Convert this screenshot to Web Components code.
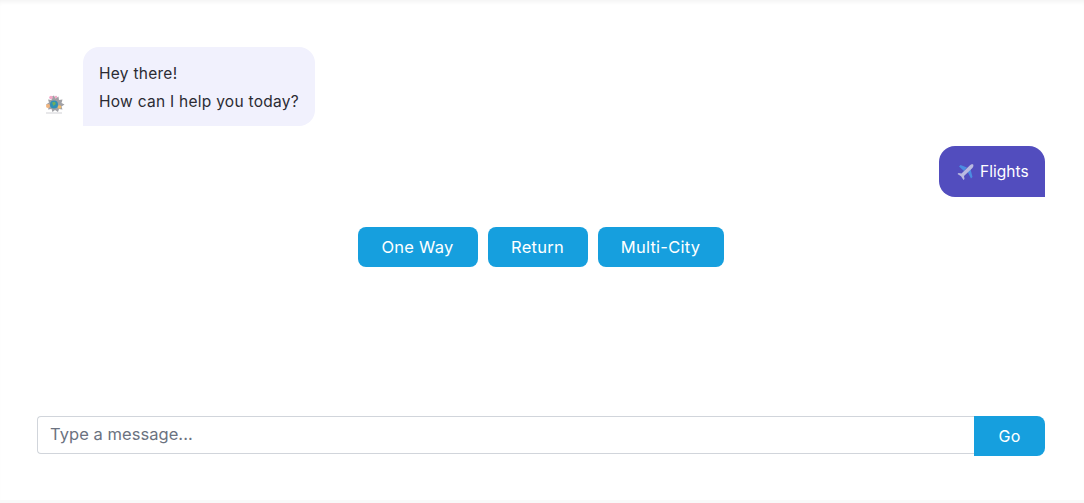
<!DOCTYPE html>
<html lang="en">
<head>
<meta charset="utf-8">
<title>Chat</title>
<style>
  html, body { margin: 0; background: #f9f9f9; }
  body { font-family: Inter, "Liberation Sans", sans-serif; }
</style>
</head>
<body>
<chat-app>
  <bot-message>
    <p>Hey there!</p>
    <p>How can I help you today?</p>
  </bot-message>
  <user-message>Flights</user-message>
  <quick-replies>
    <quick-reply style="--width: 120px">One Way</quick-reply>
    <quick-reply style="--width: 100px">Return</quick-reply>
    <quick-reply style="--width: 126px">Multi-City</quick-reply>
  </quick-replies>
</chat-app>
<script>
customElements.define(
  "chat-app",
  class extends HTMLElement {
    constructor() {
      super();
      this.attachShadow({ mode: "open" }).innerHTML = `
        <style>
        :host {
          display: flex;
          flex-direction: column;
          height: 500px;
          box-sizing: border-box;
          background: #fff;
          box-shadow: inset 0 4px 4px -2px rgba(0, 0, 0, 0.05);
        }
        .log {
          flex: 1;
          display: flex;
          flex-direction: column;
          padding: 47px 39px 0 37px;
        }
        .foot {
          padding: 0 39px 44px 37px;
        }
        </style>
        <div class="log"><slot></slot></div>
        <div class="foot"><message-box></message-box></div>
      `;
    }
  }
);

customElements.define(
  "bot-message",
  class extends HTMLElement {
    constructor() {
      super();
      this.attachShadow({ mode: "open" }).innerHTML = `
        <style>
        :host {
          display: flex;
          align-items: flex-end;
          gap: 17px;
          padding-left: 7px;
        }
        svg { width: 22px; height: 22px; margin-bottom: 10px; margin-left: -1px; margin-right: 1px; flex: none; }
        .bubble {
          width: 200px;
          background: #f1f1fd;
          border-radius: 16px 16px 16px 0;
          padding: 13px 16px 10px;
          color: #2b2b33;
          font-size: 15.5px;
          line-height: 28px;
          letter-spacing: 0.27px;
          white-space: nowrap;
        }
        ::slotted(p) { margin: 0; }
        </style>
        <svg viewBox="0 0 22 22">
          <path d="M11 1.500l1.500 3 3-2 .5 3.500 3.500-.5-1 3.500 3 1.500-3 2 1 3-3.500-.5-1 3-3-2-2.500 2-1-3-3.500.5 1-3.500-3-1.500 3-2-1-3 3.500.5.500-3.500z" fill="#77777f" opacity=".7"/>
          <circle cx="8" cy="3.500" r="1.800" fill="#f4a9c8"/>
          <circle cx="13" cy="3" r="1.200" fill="#f4a9c8"/>
          <circle cx="5" cy="12" r="2" fill="#f3b57e"/>
          <circle cx="16.500" cy="13" r="1.800" fill="#f2bb6a"/>
          <circle cx="11" cy="10.500" r="4" fill="#2e8fb5"/>
          <path d="M9 8.500l3-.8 .8 2.300-2.400 2z" fill="#6fae5c"/>
          <rect x="3" y="18.500" width="16" height="1" fill="#d2d2d6"/>
        </svg>
        <div class="bubble"><slot></slot></div>
      `;
    }
  }
);

customElements.define(
  "user-message",
  class extends HTMLElement {
    constructor() {
      super();
      this.attachShadow({ mode: "open" }).innerHTML = `
        <style>
        :host {
          display: flex;
          justify-content: flex-end;
          margin-top: 20px;
        }
        .bubble {
          display: flex;
          align-items: center;
          gap: 5px;
          height: 51px;
          width: 106px;
          box-sizing: border-box;
          padding: 0 0 0 18px;
          background: #524dbe;
          border-radius: 16px 16px 0 16px;
          color: #fff;
          font-size: 15.5px;
          letter-spacing: 0.05px;
        }
        svg { width: 18px; height: 18px; flex: none; opacity: 0.85; }
        </style>
        <div class="bubble">
          <svg viewBox="0 0 18 18">
            <path d="M10 4.500L3.500 2 2 3.500 7 8z" fill="#4a97e8"/>
            <path d="M10.500 8.500L14 15.500 15.500 14 13.500 6z" fill="#4a97e8"/>
            <path d="M16.500 1.500c-1-.8-2.600-.2-3.800 1L4.500 10.500 1.500 10 .5 11l3.500 2.300L6.500 17l1-1-.5-3 8.200-7.800c1.200-1.200 1.600-2.800.8-3.700z" fill="#cdcde6"/>
          </svg>
          <slot></slot>
        </div>
      `;
    }
  }
);

customElements.define(
  "quick-replies",
  class extends HTMLElement {
    constructor() {
      super();
      this.attachShadow({ mode: "open" }).innerHTML = `
        <style>
        :host {
          display: flex;
          justify-content: center;
          gap: 10px;
          margin-top: 30px;
          padding-right: 1px;
        }
        </style>
        <slot></slot>
      `;
    }
  }
);

customElements.define(
  "quick-reply",
  class extends HTMLElement {
    constructor() {
      super();
      this.attachShadow({ mode: "open" }).innerHTML = `
        <style>
        :host {
          display: flex;
          align-items: center;
          justify-content: center;
          width: var(--width);
          height: 40px;
          background: #169fde;
          border-radius: 8px;
          color: #fff;
          font-size: 16.5px;
          letter-spacing: 0.25px;
        }
        </style>
        <slot></slot>
      `;
    }
  }
);

customElements.define(
  "message-box",
  class extends HTMLElement {
    constructor() {
      super();
      this.attachShadow({ mode: "open" }).innerHTML = `
        <style>
        :host { display: flex; align-items: flex-start; }
        input {
          flex: 1;
          min-width: 0;
          height: 38px;
          box-sizing: border-box;
          padding: 0 12px 2px;
          border: 1px solid #d1d5db;
          border-right: none;
          border-radius: 4px 0 0 4px;
          outline: none;
          font: 16.5px Inter, "Liberation Sans", sans-serif;
          letter-spacing: 0.05px;
          color: #333;
        }
        input::placeholder { color: #6b7280; opacity: 1; }
        button {
          width: 71px;
          height: 40px;
          border: none;
          padding: 0;
          background: #169fde;
          border-radius: 0 8px 8px 0;
          color: #fff;
          font: 16px Inter, "Liberation Sans", sans-serif;
          letter-spacing: 0.2px;
        }
        </style>
        <input type="text" placeholder="Type a message...">
        <button>Go</button>
      `;
    }
  }
);
</script>
</body>
</html>
